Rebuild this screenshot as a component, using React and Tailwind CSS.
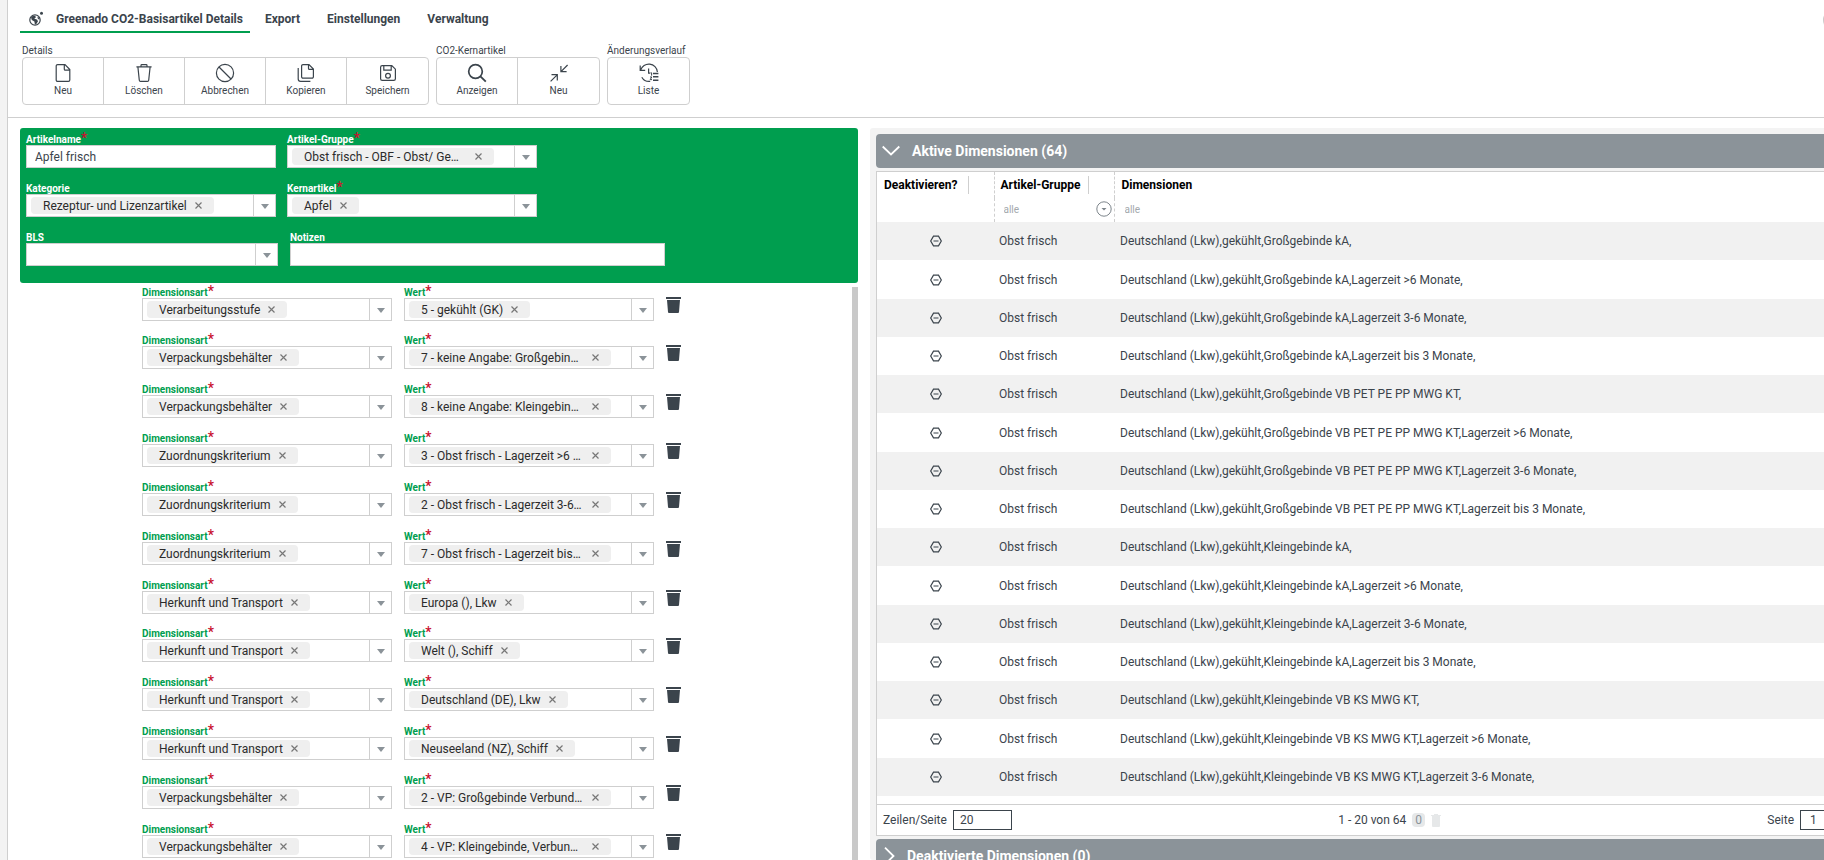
import React, { useState } from 'react';

const tabs = ['Export', 'Einstellungen', 'Verwaltung'];

const headerFields = [
  { id: 'gruppe', label: 'Artikel-Gruppe', value: 'Obst frisch - OBF - Obst/ Ge…', required: true },
  { id: 'kategorie', label: 'Kategorie', value: 'Rezeptur- und Lizenzartikel' },
  { id: 'kernartikel', label: 'Kernartikel', value: 'Apfel', required: true },
];

const dimensionRows = [
  ['Verarbeitungsstufe', '5 - gekühlt (GK)'],
  ['Verpackungsbehälter', '7 - keine Angabe: Großgebin…'],
  ['Verpackungsbehälter', '8 - keine Angabe: Kleingebin…'],
  ['Zuordnungskriterium', '3 - Obst frisch - Lagerzeit >6 …'],
  ['Zuordnungskriterium', '2 - Obst frisch - Lagerzeit 3-6…'],
  ['Zuordnungskriterium', '7 - Obst frisch - Lagerzeit bis…'],
  ['Herkunft und Transport', 'Europa (), Lkw'],
  ['Herkunft und Transport', 'Welt (), Schiff'],
  ['Herkunft und Transport', 'Deutschland (DE), Lkw'],
  ['Herkunft und Transport', 'Neuseeland (NZ), Schiff'],
  ['Verpackungsbehälter', '2 - VP: Großgebinde Verbund…'],
  ['Verpackungsbehälter', '4 - VP: Kleingebinde, Verbun…'],
];

const activeDimensions = [
  'Deutschland (Lkw),gekühlt,Großgebinde kA,',
  'Deutschland (Lkw),gekühlt,Großgebinde kA,Lagerzeit >6 Monate,',
  'Deutschland (Lkw),gekühlt,Großgebinde kA,Lagerzeit 3-6 Monate,',
  'Deutschland (Lkw),gekühlt,Großgebinde kA,Lagerzeit bis 3 Monate,',
  'Deutschland (Lkw),gekühlt,Großgebinde VB PET PE PP MWG KT,',
  'Deutschland (Lkw),gekühlt,Großgebinde VB PET PE PP MWG KT,Lagerzeit >6 Monate,',
  'Deutschland (Lkw),gekühlt,Großgebinde VB PET PE PP MWG KT,Lagerzeit 3-6 Monate,',
  'Deutschland (Lkw),gekühlt,Großgebinde VB PET PE PP MWG KT,Lagerzeit bis 3 Monate,',
  'Deutschland (Lkw),gekühlt,Kleingebinde kA,',
  'Deutschland (Lkw),gekühlt,Kleingebinde kA,Lagerzeit >6 Monate,',
  'Deutschland (Lkw),gekühlt,Kleingebinde kA,Lagerzeit 3-6 Monate,',
  'Deutschland (Lkw),gekühlt,Kleingebinde kA,Lagerzeit bis 3 Monate,',
  'Deutschland (Lkw),gekühlt,Kleingebinde VB KS MWG KT,',
  'Deutschland (Lkw),gekühlt,Kleingebinde VB KS MWG KT,Lagerzeit >6 Monate,',
  'Deutschland (Lkw),gekühlt,Kleingebinde VB KS MWG KT,Lagerzeit 3-6 Monate,',
];

const Icon = ({ children }) => (
  <svg className="h-5 w-5" viewBox="0 0 20 20" fill="none" stroke="currentColor" strokeWidth="1.2" aria-hidden="true">
    {children}
  </svg>
);

const NewIcon = () => (
  <Icon>
    <path d="M12 1.6H4.6a1.4 1.4 0 0 0-1.4 1.4v14a1.4 1.4 0 0 0 1.4 1.4h10.8a1.4 1.4 0 0 0 1.4-1.4V6.6zM11.3 1.8v4.4a1 1 0 0 0 1 1h4.4" />
  </Icon>
);

const DeleteIcon = () => (
  <Icon>
    <path d="M2.4 3.9h15.2M7 3.7V2.4q0-.8.8-.8h4.4q.8 0 .8.8v1.3M3.9 4l1.4 13.3a1.2 1.2 0 0 0 1.2 1.1h7a1.2 1.2 0 0 0 1.2-1.1L16.1 4" />
  </Icon>
);

const CancelIcon = () => (
  <Icon>
    <circle cx="10" cy="10" r="8.6" />
    <path d="M4 4l12 12" />
  </Icon>
);

const CopyIcon = () => (
  <Icon>
    <path d="M13 1.6H7A1.4 1.4 0 0 0 5.6 3v10.8A1.4 1.4 0 0 0 7 15.2h9a1.4 1.4 0 0 0 1.4-1.4V6zM12.5 1.8v3.6a1 1 0 0 0 1 1h3.7M2.2 5v11a2.4 2.4 0 0 0 2.4 2.4h9.8" />
  </Icon>
);

const SaveIcon = () => (
  <Icon>
    <path d="M13.8 2.6H4.2a1.6 1.6 0 0 0-1.6 1.6v11.6a1.6 1.6 0 0 0 1.6 1.6h11.6a1.6 1.6 0 0 0 1.6-1.6V6.2zM5.8 2.8v4.4h7.4V2.8" />
    <circle cx="10" cy="12.8" r="2.4" />
  </Icon>
);

const SearchIcon = () => (
  <Icon>
    <circle cx="8.5" cy="8.5" r="6.8" strokeWidth="1.7" />
    <path d="M13.4 13.4l5.4 5.2" strokeWidth="1.9" />
  </Icon>
);

const CollapseIcon = () => (
  <Icon>
    <path d="M18.6 2L12 8.6M11.9 3v5.7h5.7M1.6 18.4l6.6-6.6M2.5 11.6h5.8v5.8" />
  </Icon>
);

const HistoryIcon = () => (
  <Icon>
    <path d="M1.2 2.4v5h5M1.6 7.2A8.6 8.6 0 0 1 18.4 9M2.8 14.2a8.6 8.6 0 0 0 8.4 4.2" />
    <path d="M9.6 5.600v4.600h1.600" />
    <path d="M14 10.400h5.400M14 13.800h5.400M14 17.200h5.400" strokeWidth="1.5" />
    <path d="M11.600 9.800h1v2.800M11 14h1.800l-1.600 2.600h1.800" strokeWidth="1" />
  </Icon>
);

const ribbonGroups = [
  {
    title: 'Details',
    actions: [
      ['Neu', NewIcon],
      ['Löschen', DeleteIcon],
      ['Abbrechen', CancelIcon],
      ['Kopieren', CopyIcon],
      ['Speichern', SaveIcon],
    ],
  },
  {
    title: 'CO2-Kernartikel',
    actions: [
      ['Anzeigen', SearchIcon],
      ['Neu', CollapseIcon],
    ],
  },
  { title: 'Änderungsverlauf', actions: [['Liste', HistoryIcon]] },
];

const GlobeIcon = () => (
  <svg className="h-4 w-4" viewBox="0 0 16 16" fill="none" stroke="#3b444c" aria-hidden="true">
    <circle cx="7" cy="9" r="5.2" strokeWidth="1.2" />
    <path d="M3 6.5l1.8-1.8 2.6.3.4 1.4-1.6 1.4 2.8.8 1 1.6-2 3.2-1.200-.4-.4-2.600-2.600-1.400z" fill="#3b444c" stroke="none" />
    <path d="M10 5.500l1.800 2.500-1 .6-1.400-1.500z" fill="#3b444c" stroke="none" />
    <circle cx="13.5" cy="2.2" r="1.5" fill="#3b444c" stroke="none" />
  </svg>
);

const TrashIcon = () => (
  <svg className="h-4 w-[15px]" viewBox="0 0 15 16" fill="currentColor" aria-hidden="true">
    <path d="M0 0h15v2H0zM1 3h13l-1 12a1 1 0 0 1-1 1H3a1 1 0 0 1-1-1z" />
  </svg>
);

const Label = ({ htmlFor, required, children }) => (
  <label htmlFor={htmlFor} className="flex h-[13px] text-[10px] leading-[15px] font-bold">
    {children}
    {required && <span className="text-[14px] leading-[13px] font-medium text-[#c8102e]">*</span>}
  </label>
);

const TagField = ({ id, label, value, required }) => {
  const [tag, setTag] = useState(value);
  // shortened values fill the widest tag
  const tagWidth = tag.endsWith('…') ? 'w-[202px]' : '';

  return (
    <div>
      <Label htmlFor={id} required={required}>{label}</Label>
      <div className="flex h-[23px] border border-[#cfcfcf] bg-white">
        <div className="flex min-w-0 flex-1 items-center pl-1">
          {tag && (
            <span className={`flex h-[17px] items-center justify-between rounded-sm bg-[#efefef] px-3 text-[12px] text-[#2b2b2b] ${tagWidth}`}>
              <span className="whitespace-nowrap">{tag}</span>
              <button type="button" onClick={() => setTag('')} aria-label={`${tag} entfernen`} className="ml-2 shrink-0">
                <svg className="h-[7px] w-[7px]" viewBox="0 0 7 7" stroke="#777" strokeWidth="1.2" aria-hidden="true">
                  <path d="M.5.5l6 6M6.5.5l-6 6" />
                </svg>
              </button>
            </span>
          )}
        </div>
        <button id={id} type="button" className="flex w-[22px] items-center justify-center border-l border-[#cfcfcf] pt-0.5">
          <svg className="h-[5px] w-2" viewBox="0 0 8 5" fill="#8b9399" aria-hidden="true">
            <path d="M0 0h8L4 5z" />
          </svg>
        </button>
      </div>
    </div>
  );
};

const Ribbon = () => (
  <header className="border-b border-[#cfcfcf] pl-3">
    <nav className="flex h-[33px] items-stretch pt-[7px] text-[12px] font-bold text-[#3b444c]">
      <a href="#details" className="flex items-center gap-3 border-b-2 border-[#009e4f] pr-[7px] pl-2">
        <GlobeIcon />
        Greenado CO2-Basisartikel Details
      </a>
      {tabs.map((tab, i) => (
        <a key={tab} href={`#${tab}`} className={`flex items-center border-b-2 border-transparent ${i === 0 ? 'pl-[15px]' : 'pl-[27px]'}`}>
          {tab}
        </a>
      ))}
      <button type="button" aria-label="Hilfe" className="-mr-[19px] ml-auto h-5 w-5 self-center rounded-full bg-[#c9c9c9]" />
    </nav>
    <div className="flex gap-[7px] pt-[11px] pb-3">
      {ribbonGroups.map((group) => (
        <section key={group.title} className="first:ml-0.5">
          <h2 className="h-[13px] text-[10px] leading-[13px] whitespace-nowrap text-[#3b444c]">{group.title}</h2>
          <div className="flex divide-x divide-[#cfcfcf] rounded-sm border border-[#cfcfcf]">
            {group.actions.map(([name, ActionIcon]) => (
              <button key={name} type="button" className="flex h-[46px] min-w-[81px] flex-col items-center pt-[5px] text-[10px] leading-4 text-[#3b444c]">
                <ActionIcon />
                {name}
              </button>
            ))}
          </div>
        </section>
      ))}
    </div>
  </header>
);

const ArticleForm = () => (
  <form className="h-[155px] rounded-[3px] bg-[#009e4f] pt-1 pl-[6px] text-white">
    <div className="grid grid-cols-[250px_250px] gap-x-[11px] gap-y-[13px]">
      <div>
        <Label htmlFor="name" required>Artikelname</Label>
        <input id="name" defaultValue="Apfel frisch" className="block h-[23px] w-full border border-[#cfcfcf] bg-white px-2 text-[12px] text-[#3b444c]" />
      </div>
      {headerFields.map((field) => (
        <TagField key={field.id} {...field} />
      ))}
    </div>
    <div className="mt-[13px] grid grid-cols-[252px_375px] gap-x-3">
      <TagField id="bls" label="BLS" value="" />
      <div>
        <Label htmlFor="notizen">Notizen</Label>
        <input id="notizen" className="block h-[23px] w-full border border-[#cfcfcf] bg-white px-2 text-[12px] text-[#3b444c]" />
      </div>
    </div>
  </form>
);

const DimensionForm = () => (
  <div className="flex min-h-0 flex-1">
    <div className="flex-1 overflow-hidden pt-0.5 pl-[122px]">
      {dimensionRows.map(([type, value], i) => (
        <div key={i} className="grid h-[49px] grid-cols-[250px_250px_15px] items-start gap-x-3 text-[#009e4f] [&:nth-child(6n+1)]:h-[48px]">
          <TagField id={`art-${i}`} label="Dimensionsart" value={type} required />
          <TagField id={`wert-${i}`} label="Wert" value={value} required />
          <button type="button" aria-label="Dimension löschen" className="mt-3 text-[#3b444c]">
            <TrashIcon />
          </button>
        </div>
      ))}
    </div>
    <div className="mt-1 w-[6px] bg-[#c9c9c9]" />
  </div>
);

const DimensionTable = () => (
  <table className="w-full table-fixed border-collapse text-left text-[12px] text-[#3b444c]">
    <colgroup>
      <col className="w-[117px]" />
      <col className="w-[120px]" />
      <col />
    </colgroup>
    <thead className="text-black">
      <tr className="h-[26px]">
        <th className="pl-[7px]">
          <span className="inline-block border-r border-[#cfcfcf] pr-[10px]">Deaktivieren?</span>
        </th>
        <th className="border-l border-dashed border-[#cfcfcf] pl-[6px]">
          <span className="inline-block border-r border-[#cfcfcf] pr-2">Artikel-Gruppe</span>
        </th>
        <th className="border-l border-dashed border-[#cfcfcf] pl-[7px]">Dimensionen</th>
      </tr>
      <tr className="h-[24px]">
        <td />
        <td className="border-l border-dashed border-[#cfcfcf] pr-0.5 pb-0.5 pl-[9px]">
          <div className="flex items-center">
            <input aria-label="Artikel-Gruppe filtern" placeholder="alle" className="h-4 w-full min-w-0 text-[10px] placeholder:text-[#a3a9ad]" />
            <button type="button" aria-label="Filter wählen">
              <svg className="h-4 w-4" viewBox="0 0 16 16" fill="none" stroke="#7d858b" aria-hidden="true">
                <circle cx="8" cy="8" r="7.2" />
                <path d="M5.5 7h5L8 9.6z" fill="#7d858b" stroke="none" />
              </svg>
            </button>
          </div>
        </td>
        <td className="border-l border-dashed border-[#cfcfcf] pb-0.5 pl-[10px]">
          <input aria-label="Dimensionen filtern" placeholder="alle" className="block h-4 w-full text-[10px] placeholder:text-[#a3a9ad]" />
        </td>
      </tr>
    </thead>
    <tbody>
      {activeDimensions.map((dimension) => (
        <tr key={dimension} className="h-[38px] odd:bg-[#f1f1f1] [&:nth-child(4n+2)]:h-[39px]">
          <td>
            <button type="button" aria-label="Deaktivieren" className="mx-auto block">
              <svg className="h-3 w-3" viewBox="0 0 12 12" fill="none" stroke="currentColor" strokeWidth="1.2" aria-hidden="true">
                <path d="M3.5 1.2h5L11.3 6 8.5 10.8h-5L.7 6zM3.5 6h5" />
              </svg>
            </button>
          </td>
          <td className="pl-[5px]">Obst frisch</td>
          <td className="pl-[6px] whitespace-nowrap">{dimension}</td>
        </tr>
      ))}
    </tbody>
  </table>
);

const TableFooter = () => (
  <footer className="mt-2 flex h-[31px] items-center justify-between border-t border-[#cfcfcf] px-[6px] text-[12px] text-[#3b444c]">
    <div className="flex items-center gap-[6px]">
      <label htmlFor="page-size">Zeilen/Seite</label>
      <input id="page-size" defaultValue="20" className="h-5 w-[59px] border border-[#3b444c] px-[6px]" />
    </div>
    <div className="flex items-center gap-[6px]">
      1 - 20 von 64
      <span className="rounded-sm bg-[#e6e8e9] px-[3px] leading-[14px] text-[#8b9399]">0</span>
      <button type="button" disabled aria-label="Auswahl löschen" className="text-[#e6e8e9]">
        <svg className="h-[13px] w-[10px]" viewBox="0 0 10 13" fill="currentColor" aria-hidden="true">
          <path d="M3 0h4v1h3v1H9v10a1 1 0 0 1-1 1H2a1 1 0 0 1-1-1V2H0V1h3z" />
        </svg>
      </button>
    </div>
    <div className="flex items-center gap-[6px]">
      <label htmlFor="page">Seite</label>
      <input id="page" defaultValue="1" className="h-5 w-[59px] border border-[#3b444c] px-[9px]" />
      <button type="button" aria-label="Nächste Seite" className="flex w-7 justify-center">
        <svg className="h-3 w-2" viewBox="0 0 8 12" fill="none" stroke="currentColor" aria-hidden="true">
          <path d="M1 1l5 5-5 5" />
        </svg>
      </button>
    </div>
  </footer>
);

const App = () => (
  <div className="flex h-screen overflow-hidden bg-[#f3f3f3] font-[Roboto,sans-serif]">
    <div className="ml-[7px] flex min-w-0 flex-1 flex-col border-l border-[#cfcfcf] bg-white">
      <Ribbon />
      <main className="flex min-h-0 flex-1 gap-3 overflow-hidden pt-[10px] pl-3">
        <div className="flex w-[838px] shrink-0 flex-col">
          <ArticleForm />
          <DimensionForm />
        </div>
        <div className="-mr-[76px] min-w-0 flex-1 overflow-hidden rounded-l-[3px] bg-[#f3f3f3] pt-[6px] pl-[6px]">
          <button type="button" className="flex h-[34px] w-full items-center gap-3 rounded-sm bg-[#8b9399] pl-[6px] text-[14px] font-bold text-white">
            <svg className="h-[18px] w-[18px]" viewBox="0 0 18 18" fill="none" stroke="currentColor" strokeWidth="1.8" aria-hidden="true">
              <path d="M.7 4.5L9 12.5l8.3-8" />
            </svg>
            Aktive Dimensionen (64)
          </button>
          <div className="mt-[3px] border border-[#cfcfcf] bg-white">
            <DimensionTable />
            <TableFooter />
          </div>
          <button type="button" className="mt-[3px] flex h-[34px] w-full items-center gap-[7px] rounded-sm bg-[#8b9399] pl-[6px] text-[14px] font-bold text-white">
            <svg className="h-[18px] w-[18px]" viewBox="0 0 18 18" fill="none" stroke="currentColor" strokeWidth="1.8" aria-hidden="true">
              <path d="M3 .7L11.5 9 3 17.3" />
            </svg>
            Deaktivierte Dimensionen (0)
          </button>
        </div>
      </main>
    </div>
  </div>
);

export default App;
